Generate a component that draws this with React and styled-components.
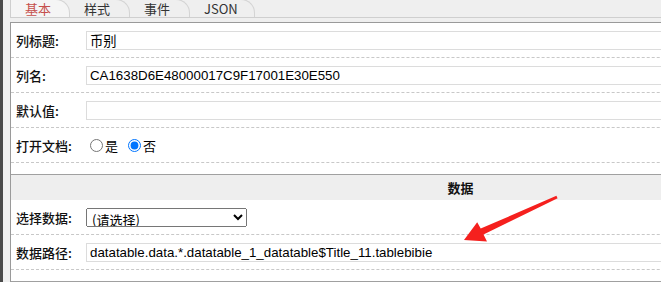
import React from "react";
import styled, { createGlobalStyle } from "styled-components";

const GlobalStyle = createGlobalStyle`
  html, body {
    margin: 0;
    padding: 0;
    background: #efefef;
    overflow: hidden;
  }
  body {
    font-family: "Liberation Sans", "Noto Sans CJK SC", sans-serif;
  }
`;

const tabs = ["基本", "样式", "事件", "JSON"];

function App() {
  return (
    <Page>
      <GlobalStyle />
      <SideStrip />
      <Main>
        <TabBar>
          {tabs.map((t, i) => (
            <Tab key={t} active={i === 0} wide={i === tabs.length - 1}>
              {t}
            </Tab>
          ))}
        </TabBar>
        <Gap />
        <Panel>
          <Section>
            <Row>
              <Label>列标题:</Label>
              <Value>
                <TextInput defaultValue="币别" />
              </Value>
            </Row>
            <Row>
              <Label>列名:</Label>
              <Value>
                <TextInput defaultValue="CA1638D6E48000017C9F17001E30E550" />
              </Value>
            </Row>
            <Row>
              <Label>默认值:</Label>
              <Value>
                <TextInput defaultValue="" />
              </Value>
            </Row>
            <Row>
              <Label>打开文档:</Label>
              <Value>
                <RadioLabel>
                  <Radio type="radio" name="doc" />是
                </RadioLabel>
                <RadioLabel>
                  <Radio type="radio" name="doc" defaultChecked />否
                </RadioLabel>
              </Value>
            </Row>
          </Section>
          <GroupHeader>数据</GroupHeader>
          <Section>
            <Row>
              <Label>选择数据:</Label>
              <Value>
                <Select defaultValue="">
                  <option value="">(请选择)</option>
                </Select>
              </Value>
            </Row>
            <Row>
              <Label>数据路径:</Label>
              <Value>
                <TextInput defaultValue="datatable.data.*.datatable_1_datatable$Title_11.tablebibie" />
              </Value>
            </Row>
          </Section>
          <Arrow width="110" height="56" viewBox="455 195 110 56">
            <polygon
              points="556.6,200.2 482.5,236.6 486,243.4 463,242 476.2,224.2 479.7,230.6 555.4,197.8"
              fill="#f5201e"
            />
          </Arrow>
        </Panel>
      </Main>
    </Page>
  );
}

const Page = styled.div`
  display: flex;
  width: 661px;
  height: 282px;
  overflow: hidden;
  position: relative;
`;

const SideStrip = styled.div`
  width: 3px;
  flex: none;
  background: #4a4a4a;
`;

const Main = styled.div`
  flex: none;
  width: 900px;
  padding-left: 7px;
  display: flex;
  flex-direction: column;
`;

const TabBar = styled.div`
  display: flex;
  border-bottom: 1px solid #cfcfcf;
  box-sizing: border-box;
  margin-top: -1px;
  height: 19px;
`;

const Tab = styled.div`
  width: ${(p) => (p.wide ? "65px" : "60px")};
  box-sizing: border-box;
  border-left: ${(p) => (p.active ? "1px solid #cfcfcf" : "none")};
  border-right: 1px solid #d4d4d4;
  border-top: 1px solid #d4d4d4;
  border-top-right-radius: 14px;
  background: ${(p) => (p.active ? "#f5f5f5" : "#efefef")};
  color: ${(p) => (p.active ? "#c5504c" : "#333")};
  font-family: "Noto Sans CJK SC", sans-serif;
  font-size: 13px;
  line-height: 17px;
  padding-left: 14px;
`;

const Gap = styled.div`
  height: 6px;
`;

const Panel = styled.div`
  position: relative;
  flex: 1;
  background: #fff;
  border-top: 1px solid #9a9a9a;
  border-left: 1px solid #9a9a9a;
`;

const Section = styled.div`
  padding-bottom: 11px;
  border-bottom: 1px solid #a0a0a0;
`;

const Row = styled.div`
  display: flex;
  align-items: center;
  height: 35px;
  border-bottom: 1px dashed #c8c8c8;
  box-sizing: border-box;
`;

const Label = styled.div`
  width: 75px;
  flex: none;
  padding-left: 5px;
  box-sizing: border-box;
  font-family: "Noto Sans CJK SC", sans-serif;
  font-size: 13px;
  font-weight: 500;
  color: #111;
`;

const Value = styled.div`
  flex: 1;
  display: flex;
  align-items: center;
  padding-right: 20px;
`;

const TextInput = styled.input`
  width: 100%;
  height: 19px;
  box-sizing: border-box;
  border: 1px solid #dcdcdc;
  padding: 0 3px;
  font-family: "Liberation Sans", "Noto Sans CJK SC", sans-serif;
  font-size: 13.3px;
  color: #000;
  outline: none;
`;

const RadioLabel = styled.label`
  display: flex;
  align-items: center;
  margin-right: 6px;
  font-family: "Noto Sans CJK SC", sans-serif;
  font-size: 13px;
  color: #000;
`;

const Radio = styled.input`
  margin: 0 2px 0 4px;
  width: 13px;
  height: 13px;
`;

const Select = styled.select`
  width: 161px;
  height: 19px;
  font-family: "Noto Sans CJK SC", sans-serif;
  font-size: 13px;
  padding: 0 1px;
  color: #000;
`;

const GroupHeader = styled.div`
  height: 25px;
  background: #eeeeee;
  display: flex;
  align-items: center;
  justify-content: center;
  font-family: "Noto Sans CJK SC", sans-serif;
  font-size: 13px;
  font-weight: 700;
  color: #111;
`;

const Arrow = styled.svg`
  position: absolute;
  left: 445px;
  top: 170px;
`;

export default App;
